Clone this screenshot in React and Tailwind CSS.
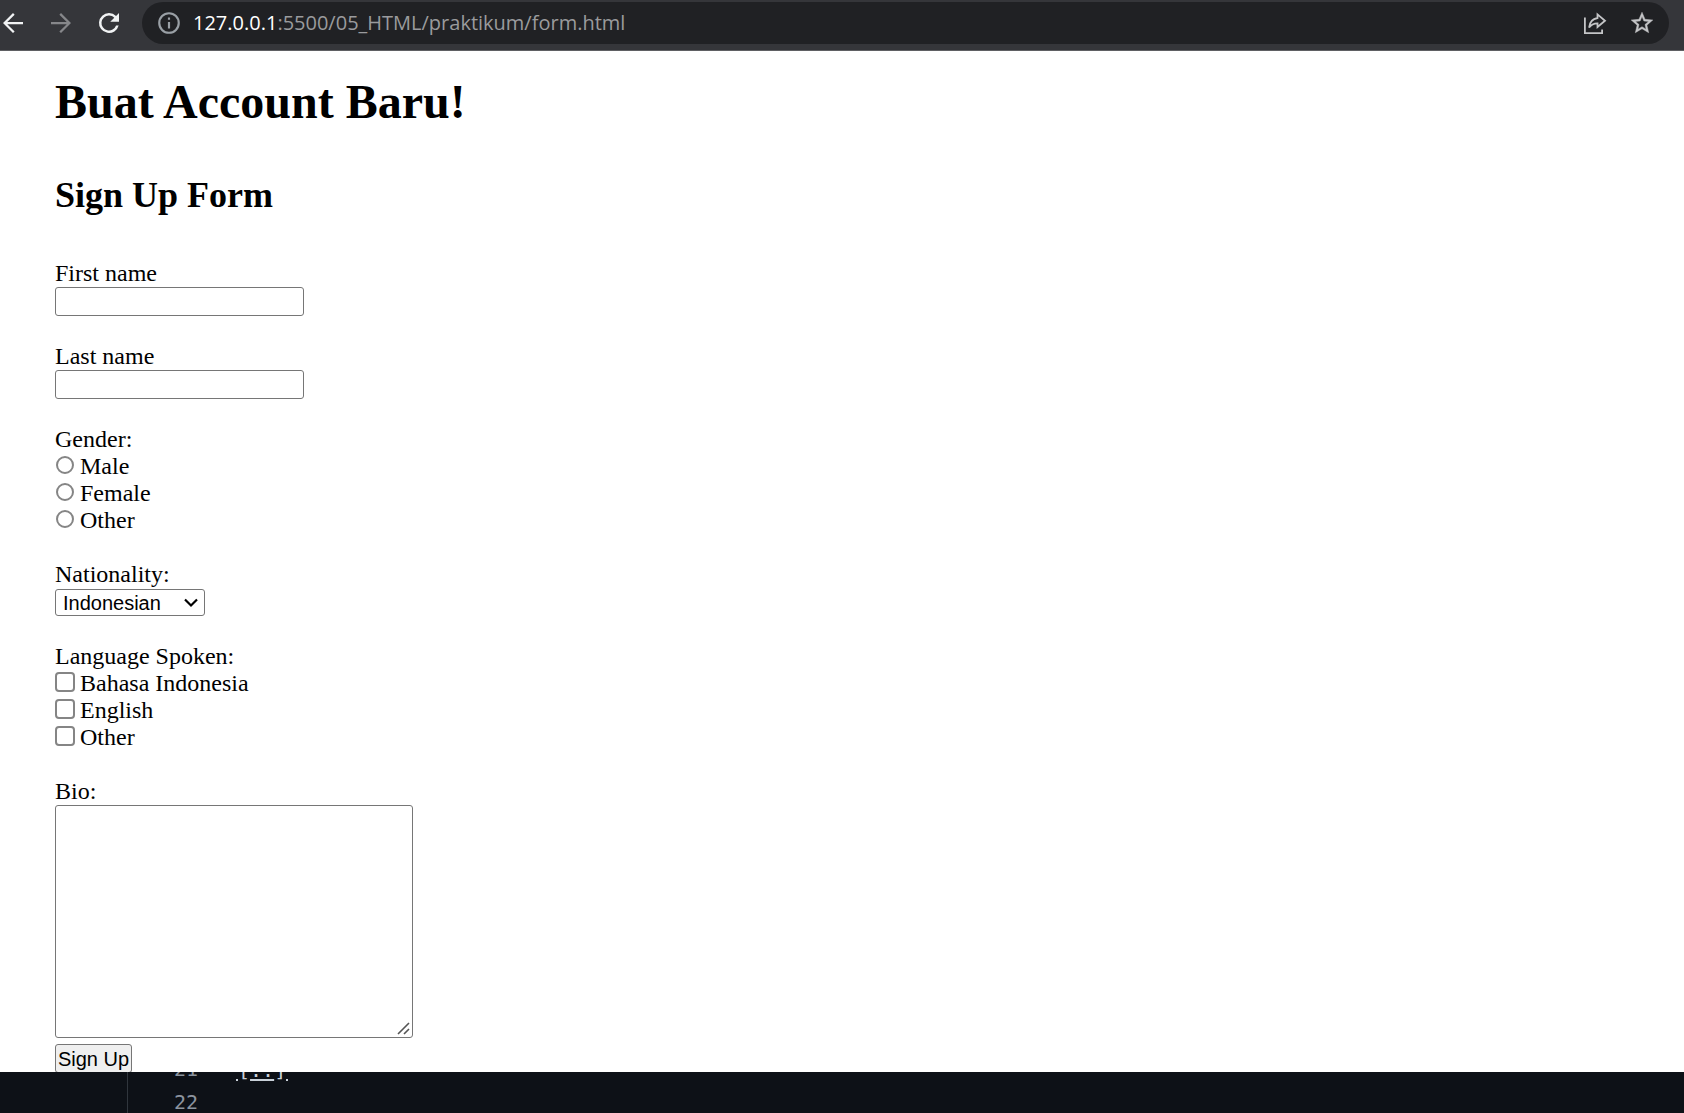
import React from "react";

const ROW = "flex h-[27px] items-center";
const FIELD = "block rounded-[3px] border border-[#767676] font-['Liberation_Sans',Arial,sans-serif] text-[20px] text-black";

function IconButton({ label, children, className }) {
  return (
    <button type="button" aria-label={label} className={`shrink-0 ${className}`}>
      {children}
    </button>
  );
}

function BrowserBar() {
  return (
    <header className="flex h-[51px] items-start border-b border-[#5f6063] bg-[#35363a] pt-[2px] pr-[15px] font-['Open_Sans','Noto_Sans',sans-serif]">
      <nav className="-ml-[2px] flex h-[42px] w-[144px] shrink-0 items-center gap-[18px]">
        <IconButton label="Back" className="text-[#f1f3f4]">
          <svg viewBox="0 0 24 24" className="size-[30px]" fill="currentColor">
            <path d="M20 11.1H7.4l5.9-5.8L12 4l-8 8 8 8 1.3-1.3-5.9-5.8H20z" />
          </svg>
        </IconButton>
        <IconButton label="Forward" className="text-[#86878a]">
          <svg viewBox="0 0 24 24" className="size-[30px]" fill="currentColor">
            <path d="M4 11.1h12.6l-5.9-5.8L12 4l8 8-8 8-1.3-1.3 5.9-5.8H4z" />
          </svg>
        </IconButton>
        <IconButton label="Reload" className="text-[#f1f3f4]">
          <svg viewBox="0 0 24 24" className="size-[30px]" fill="currentColor">
            <path d="M17.65 6.35A7.96 7.96 0 0 0 12 4a8 8 0 1 0 7.73 10h-2.08A6 6 0 1 1 12 6c1.66 0 3.14.69 4.22 1.78L13 11h7V4z" />
          </svg>
        </IconButton>
      </nav>
      <div className="flex h-[42px] min-w-0 flex-1 items-center rounded-full bg-[#202124] pr-[14px] pl-[14px]">
        <IconButton label="Site information" className="text-[#9aa0a6]">
          <svg viewBox="0 0 24 24" className="size-[26px]" fill="currentColor">
            <path d="M11 7h2v2h-2zm0 4h2v6h-2zm1-9a10 10 0 1 0 0 20 10 10 0 0 0 0-20zm0 18a8 8 0 1 1 0-16 8 8 0 0 1 0 16z" />
          </svg>
        </IconButton>
        <label htmlFor="address" className="ml-[11px] text-[20px] leading-[28px] text-white">127.0.0.1</label>
        <input
          id="address"
          type="text"
          defaultValue=":5500/05_HTML/praktikum/form.html"
          className="min-w-0 flex-1 bg-transparent text-[20px] leading-[28px] text-[#9a9b9d] outline-none"
        />
        <IconButton label="Share" className="mt-[2px] text-[#c4c5c7]">
          <svg viewBox="0 0 24 24" className="size-[24px]" fill="none" stroke="currentColor" strokeWidth="1.8">
            <path d="M1.900 5.500v15.600h17.200V17.500" />
            <path d="M14.500 2.400l7.500 6.300-7.500 6.300v-3.600c-3.800 0-6.400 1.200-8.400 4.200.5-5 3.200-8.800 8.400-9.600z" />
          </svg>
        </IconButton>
        <IconButton label="Bookmark this page" className="ml-[22px] text-[#c4c5c7]">
          <svg viewBox="0 0 24 24" className="size-[26px]" fill="currentColor" stroke="currentColor" strokeWidth="0.400">
            <path d="M22 9.240l-7.190-.62L12 2 9.190 8.630 2 9.240l5.460 4.730L5.820 21 12 17.270 18.180 21l-1.630-7.030zM12 15.400l-3.760 2.270 1-4.280-3.320-2.880 4.380-.38L12 6.100l1.710 4.040 4.380.38-3.320 2.880 1 4.280z" />
          </svg>
        </IconButton>
      </div>
    </header>
  );
}

function TextField({ id, label }) {
  return (
    <div className="mb-[27px]">
      <label htmlFor={id} className="block">{label}</label>
      <input id={id} type="text" className={`${FIELD} h-[29px] w-[249px] bg-white px-[3px]`} />
    </div>
  );
}

function Radio({ id, label }) {
  return (
    <div className={ROW}>
      <input id={id} name="gender" type="radio" className="mr-[6px] mb-[4px] ml-px size-[18px] appearance-none rounded-full border-2 border-[#858585] bg-white checked:bg-[#0075ff]" />
      <label htmlFor={id}>{label}</label>
    </div>
  );
}

function Checkbox({ id, label }) {
  return (
    <div className={ROW}>
      <input id={id} type="checkbox" className="mr-[5px] mb-[4px] size-[20px] appearance-none rounded-[4px] border-2 border-[#858585] bg-white checked:bg-[#0075ff]" />
      <label htmlFor={id}>{label}</label>
    </div>
  );
}

function SignUpPage() {
  return (
    <main className="h-[1021px] overflow-hidden bg-white pt-[24px] pl-[55px] font-['Liberation_Serif','Times_New_Roman',serif] text-[24px] leading-[27px] text-black">
      <h1 className="text-[48px] leading-[54px] font-bold">Buat Account Baru!</h1>
      <h2 className="mt-[46px] mb-[45px] text-[36px] leading-[40px] font-bold">Sign Up Form</h2>
      <form onSubmit={(e) => e.preventDefault()}>
        <TextField id="first" label="First name" />
        <TextField id="last" label="Last name" />
        <fieldset className="mb-[27px]">
          <legend>Gender:</legend>
          <Radio id="male" label="Male" />
          <Radio id="female" label="Female" />
          <Radio id="other-gender" label="Other" />
        </fieldset>
        <div className="mb-[27px]">
          <label htmlFor="nationality" className="block">Nationality:</label>
          <div className="relative mt-px w-[150px]">
            <select id="nationality" className={`${FIELD} h-[27px] w-full appearance-none bg-white pl-[7px] leading-[24px]`}>
              <option>Indonesian</option>
            </select>
            <svg viewBox="0 0 14 10" className="pointer-events-none absolute top-[9px] right-[7px] h-[10px] w-[14px]" fill="none" stroke="#000" strokeWidth="2.200">
              <path d="M1 1.500l6 6 6-6" />
            </svg>
          </div>
        </div>
        <fieldset className="mb-[27px]">
          <legend>Language Spoken:</legend>
          <Checkbox id="bahasa" label="Bahasa Indonesia" />
          <Checkbox id="english" label="English" />
          <Checkbox id="other-language" label="Other" />
        </fieldset>
        <label htmlFor="bio" className="block">Bio:</label>
        <div className="relative w-[358px]">
          <textarea id="bio" className={`${FIELD} h-[233px] w-full resize-none bg-white p-[3px]`} />
          <svg viewBox="0 0 13 13" className="pointer-events-none absolute right-[3px] bottom-[3px] size-[13px]" fill="none" stroke="#555" strokeWidth="1.600">
            <path d="M1 12L12 1M7 12l5-5" />
          </svg>
        </div>
        <button type="submit" className={`${FIELD} mt-[6px] h-[29px] w-[77px] bg-[#efefef] text-center leading-[26px] whitespace-nowrap`}>Sign Up</button>
      </form>
    </main>
  );
}

function EditorStrip() {
  return (
    <footer className="flex h-[41px] overflow-hidden bg-[#0d1117] font-['DejaVu_Sans_Mono',monospace] text-[20px] leading-[33px] text-[#8b949e]">
      <div className="w-[128px] shrink-0 border-r border-[#30363d]" />
      <div className="-mt-[19px] w-[70px] shrink-0 text-right">
        <div>21</div>
        <div>22</div>
      </div>
      <div className="-mt-[18px] ml-[38px] flex text-[#c9d1d9]">
        <span className="mt-[25px] size-[2px] bg-[#c9d1d9]" />
        <span>[<span className="underline decoration-2 underline-offset-[2px] [text-decoration-skip-ink:none]">..</span>]</span>
        <span className="mt-[25px] size-[2px] bg-[#c9d1d9]" />
      </div>
    </footer>
  );
}

export default function App() {
  return (
    <div>
      <BrowserBar />
      <SignUpPage />
      <EditorStrip />
    </div>
  );
}
